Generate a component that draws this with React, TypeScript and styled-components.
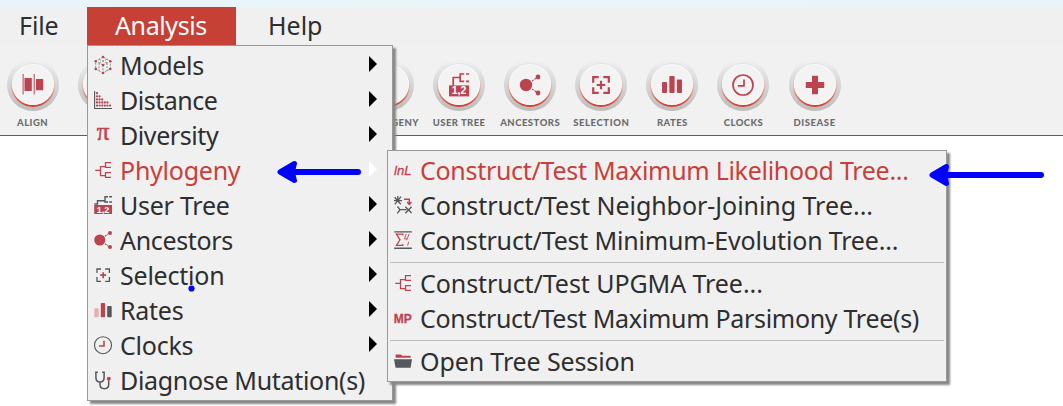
import React from 'react';
import styled, { createGlobalStyle } from 'styled-components';

const RED = '#bb4450';
const DARK = '#54585a';

const Global = createGlobalStyle`
  * { box-sizing: border-box; }
  html, body { margin: 0; padding: 0; background: #fff; overflow: hidden; }
  body { font-family: 'Noto Sans', 'Open Sans', sans-serif; color: #2e2e2e; }
`;

const Window = styled.div`
  position: relative;
  width: 1063px;
  height: 406px;
  overflow: hidden;
  background: #fff;
`;

const TitleStrip = styled.div`
  height: 7px;
  background: linear-gradient(90deg, #e8f3fb, #e9f6f8 35%, #e9f4fa);
`;

const MenuBar = styled.nav`
  display: flex;
  height: 38px;
  background: #f0f0f0;
`;

const MenuTitle = styled.div<{ $w: number; $pad: number; $active?: boolean; $ls?: number }>`
  width: ${p => p.$w}px;
  padding-left: ${p => p.$pad}px;
  height: 38px;
  line-height: 37px;
  font-size: 25px;
  letter-spacing: ${p => p.$ls ?? 0}px;
  white-space: nowrap;
  color: ${p => (p.$active ? '#fff' : '#2e2e2e')};
  background: ${p => (p.$active ? '#c74036' : 'transparent')};
`;

const Toolbar = styled.div`
  display: flex;
  height: 91px;
  padding-top: 14px;
  background: #f1f1f1;
  border-bottom: 1px solid #c8302f;
`;

const ToolButton = styled.div`
  flex: none;
  width: 71.1px;
  display: flex;
  flex-direction: column;
  align-items: center;
  &:first-child { margin-left: -3px; }
`;

const Ring = styled.div`
  width: 52px;
  height: 52px;
  padding: 4px;
  border-radius: 50%;
  background: linear-gradient(#f0f1f2 2%, #dcdddf 35%, #cdcdcd 65%, #bcbcbc);
`;

const Rim = styled.div`
  width: 44px;
  height: 44px;
  padding: 1px 1px 2px;
  border-radius: 50%;
  background: linear-gradient(#dfe5ea, #e6dfdc 30%, #e3a898 60%, #d8402f 95%);
`;

const Face = styled.div`
  height: 41px;
  border-radius: 50%;
  background: #f4f3f3;
  border: 1px solid #fbfafa;
  display: flex;
  align-items: center;
  justify-content: center;
  svg { flex: none; display: block; }
`;

const ToolLabel = styled.div<{ $ls?: number }>`
  margin-top: 6px;
  font: 900 9.5px/12px Lato, sans-serif;
  letter-spacing: ${p => p.$ls ?? 0.45}px;
  color: #6c6c6c;
  white-space: nowrap;
`;

const Menu = styled.div<{ $x: number; $y: number; $w: number }>`
  position: absolute;
  left: ${p => p.$x}px;
  top: ${p => p.$y}px;
  width: ${p => p.$w}px;
  padding: 3px 6px 1px;
  background: #f0f0f0;
  border: 1px solid #999;
  box-shadow: 3px 3px 2px #888;
`;

const MenuRow = styled.div<{ $hot?: boolean }>`
  display: flex;
  height: 35px;
  color: ${p => (p.$hot ? '#c8403a' : '#2e2e2e')};
  > svg { flex: none; margin-top: 7px; overflow: visible; }
`;

const RowText = styled.span<{ $ls?: number }>`
  flex: 1;
  margin-left: 8px;
  line-height: 33px;
  font-size: 25px;
  letter-spacing: ${p => p.$ls ?? 0}px;
  white-space: nowrap;
`;

const Chevron = styled.i<{ $hot?: boolean }>`
  flex: none;
  margin: 7px 9px 0 0;
  width: 0;
  height: 0;
  border: solid transparent;
  border-width: 8px 0 8px 8px;
  border-left-color: ${p => (p.$hot ? '#fff' : '#000')};
`;

const Divider = styled.div`
  height: 8px;
  margin: 0 -4px;
  padding-top: 3px;
  &::after { content: ''; display: block; height: 1px; background: #bdbdbd; }
`;

const Mark = styled.svg<{ $x: number; $y: number }>`
  position: absolute;
  left: ${p => p.$x}px;
  top: ${p => p.$y}px;
`;

const Small = ({ children }: { children: React.ReactNode }) => (
  <svg width="18" height="18" viewBox="0 0 18 18" fill="none">{children}</svg>
);

const ModelsIcon = () => (
  <Small>
    <path d="M9 1L1.7 5.2V13L9 17L16.3 13V5.2ZM9 9V17M9 9L1.7 5.2M9 9L16.3 5.2M5 7V15M13 7V15M5 3.2L13 7M13 3.2L5 7" stroke="#8b8d8e" strokeWidth="1" strokeDasharray="2 1.3" />
    {[[9, 1], [1.7, 5.2], [16.3, 5.2], [1.7, 13], [16.3, 13], [9, 17], [9, 9]].map(([x, y]) => (
      <circle key={`${x}-${y}`} cx={x} cy={y} r="1.3" fill={RED} />
    ))}
  </Small>
);

const DistanceIcon = () => (
  <Small>
    <path d="M.6 0V17.5H18" stroke={DARK} strokeWidth="1.1" />
    {[1, 2, 3, 5, 6].map((n, r) =>
      Array.from({ length: n }, (_, c) => (
        <circle key={`${r}-${c}`} cx={3 + c * 2.6} cy={2.2 + r * 3.1} r="1.15" fill={RED} />
      ))
    )}
  </Small>
);

const PiIcon = () => (
  <Small>
    <text x="9" y="14.4" textAnchor="middle" fontFamily="Liberation Serif, serif" fontSize="25" fill={RED} stroke={RED} strokeWidth=".5">π</text>
  </Small>
);

const TreeIcon = () => (
  <Small>
    <path d="M1.2 9.4H6.5M17 1.6H11.5V5.6H6.5V14.5H11.5M17 6.4H11.5V5M17 11.6H11.5V16.4H17" stroke={RED} strokeWidth="1.25" />
  </Small>
);

const UserTreeIcon = () => (
  <Small>
    <path d="M.3 8H3.5V4.8H11M14 .8H11V6H14M15.2 .8H18M15.2 6H18" stroke={DARK} strokeWidth="1.4" />
    <rect x=".2" y="9" width="17.8" height="9" fill={RED} />
    <text x="9.1" y="16.6" textAnchor="middle" fontFamily="Liberation Sans, sans-serif" fontWeight="bold" fontSize="9" fill="#fff">1,2</text>
  </Small>
);

const AncestorsIcon = () => (
  <Small>
    <circle cx="5.8" cy="9" r="5.6" fill={RED} />
    <circle cx="16" cy="1.9" r="2" fill={RED} />
    <circle cx="16" cy="16" r="2" fill={RED} />
    <path d="M11 5.3L14 3M11 12.7L14 15" stroke={DARK} strokeWidth="1.1" strokeDasharray="2 1" />
  </Small>
);

const SelectionIcon = () => (
  <Small>
    <path d="M3 7V3H7M11.2 3H15.4V7M15.4 11V15.4H11.2M7 15.4H3V11" stroke={DARK} strokeWidth="1.3" />
    <path d="M9.2 6.2V12.2M6.2 9.2H12.2" stroke={RED} strokeWidth="1.7" />
  </Small>
);

const RatesIcon = () => (
  <Small>
    <rect x=".3" y="7.3" width="4.4" height="8.9" rx=".8" fill="#e8aeb0" />
    <rect x="6.8" y="2" width="4.3" height="14.2" rx=".8" fill={RED} />
    <rect x="13.2" y="5" width="4.5" height="11.2" rx=".8" fill={DARK} />
  </Small>
);

const ClocksIcon = () => (
  <Small>
    <circle cx="9" cy="9.2" r="8.5" stroke={DARK} strokeWidth="1.1" />
    <path d="M10 4.7V10H5" stroke={RED} strokeWidth="1.6" />
  </Small>
);

const StethoscopeIcon = () => (
  <Small>
    <path d="M3.8 1.3H1.9V6.2C1.9 9.5 4 11 6 11S10.1 9.5 10.1 6.2V1.3H8.2M6 11V13.5C6 19 14.7 19 14.7 13.5V9.5" stroke={DARK} strokeWidth="1.5" />
    <circle cx="14.8" cy="7.7" r="2" fill={RED} />
  </Small>
);

const LnLIcon = () => (
  <Small>
    <text x="0" y="14.1" textLength="17.5" lengthAdjust="spacingAndGlyphs" fontFamily="Liberation Sans, sans-serif" fontStyle="italic" fontSize="13.5" fill={RED} stroke={RED} strokeWidth=".3">lnL</text>
  </Small>
);

const NeighborIcon = () => (
  <Small>
    <path d="M.6 1.2L6.8 8.2M7 .6L.8 8.4M3.8 0V4.5M0 4.7H8M3.5 10.5L6 13.7L3.3 17.3M6 13.7H12.5M11.3 10.8L17.6 17M17.6 10.8L11.3 17.3" stroke={DARK} strokeWidth="1.3" />
    <path d="M10 3.2H15.3V7M13.2 6L15.3 8.6L17.4 6" stroke={RED} strokeWidth="1.4" />
  </Small>
);

const EvolutionIcon = () => (
  <Small>
    <path d="M.2 .9H17.8M.2 17.2H17.8" stroke={DARK} strokeWidth="1.4" />
    <path d="M8.8 4.6V3.2H2.4L6 8.8L2.4 14.4H8.8V13" stroke={RED} strokeWidth="1.3" />
    <path d="M12.3 3L10.4 7.8H13M15.2 2.8L12.6 9.3M14.7 10.7L13.6 14.6" stroke={RED} strokeWidth=".9" />
  </Small>
);

const ParsimonyIcon = () => (
  <Small>
    <text x="-.2" y="13.6" textLength="18" lengthAdjust="spacingAndGlyphs" fontFamily="Liberation Sans, sans-serif" fontWeight="bold" fontSize="12.5" fill={RED} stroke={RED} strokeWidth=".3">MP</text>
  </Small>
);

const FolderIcon = () => (
  <Small>
    <path d="M1.6 5.8V2.5H7L8.3 3.7H16.6V5.8Z" fill={RED} />
    <path d="M0 7.2H18L16.6 15.8H1.6Z" fill={DARK} />
  </Small>
);

const Big = ({ children }: { children?: React.ReactNode }) => (
  <svg width="28" height="28" viewBox="-14 -14 28 28" fill="none">{children}</svg>
);

const tools: { id: string; label?: string; ls?: number; art?: React.ReactNode }[] = [
  {
    id: 'align',
    label: 'ALIGN',
    art: (
      <g fill={RED}>
        <path d="M-10.4 -11h1v20.6h-1zM.7 -11h1v20.6h-1z" />
        <path d="M-8.5 -7h7.3V6h-7.3zM3 -6h7.2V5.3H3z" />
      </g>
    ),
  },
  { id: 'data' },
  { id: 'models' },
  { id: 'distance' },
  { id: 'diversity' },
  {
    id: 'phylogeny',
    label: 'PHYLOGENY',
    art: <path d="M-9 0H-3M7 -10.5H1V-3.5H-3V5H1M7 -3.5H1M7 2H1V9.5H7" stroke={RED} strokeWidth="1.5" />,
  },
  {
    id: 'user-tree',
    label: 'USER TREE',
    art: (
      <>
        <path d="M-5.8 1V-7.5H1M5.2 -11H1.2V-3.7H5.2M7 -11H10.2M7 -3.7H10.2" stroke={RED} strokeWidth="1.7" />
        <rect x="-10" y=".4" width="20.2" height="11" fill={RED} />
        <text x="0" y="9.3" textAnchor="middle" fontFamily="Liberation Sans, sans-serif" fontWeight="bold" fontSize="10.5" fill="#fff">1,2</text>
      </>
    ),
  },
  {
    id: 'ancestors',
    label: 'ANCESTORS',
    ls: 0.5,
    art: (
      <g fill={RED}>
        <circle cx="-4" cy="0" r="6.2" />
        <circle cx="8" cy="-8" r="2.4" />
        <circle cx="8" cy="8" r="2.4" />
        <path d="M2 -4L6.5 -7M2 4L6.5 7" stroke={RED} strokeWidth="1.1" strokeDasharray="2 1" />
      </g>
    ),
  },
  {
    id: 'selection',
    label: 'SELECTION',
    ls: 0.6,
    art: (
      <path d="M-7.8 -2.3V-7.8H-2.3M2.3 -7.8H7.8V-2.3M7.8 2.3V7.8H2.3M-2.3 7.8H-7.8V2.3M0 -4.3V4.3M-4.3 0H4.3" stroke={RED} strokeWidth="2.2" />
    ),
  },
  {
    id: 'rates',
    label: 'RATES',
    art: (
      <g fill={RED}>
        <rect x="-10" y="-3" width="5" height="11" rx=".9" />
        <rect x="-2.7" y="-9" width="5.3" height="17" rx=".9" />
        <rect x="4.9" y="-5.6" width="5.1" height="13.6" rx=".9" />
      </g>
    ),
  },
  {
    id: 'clocks',
    label: 'CLOCKS',
    art: (
      <g stroke={RED} strokeWidth="1.7">
        <circle cx="0" cy="0" r="10" />
        <path d="M1 -5.5V.9H-5.2" />
      </g>
    ),
  },
  { id: 'disease', label: 'DISEASE', ls: 0.6, art: <path d="M0 -9.2V9.2M-9.2 0H9.2" stroke={RED} strokeWidth="6" /> },
];

const analysisItems: { text: string; ls?: number; Icon: React.FC; sub?: boolean; hot?: boolean }[] = [
  { text: 'Models', ls: -0.3, Icon: ModelsIcon, sub: true },
  { text: 'Distance', ls: -0.5, Icon: DistanceIcon, sub: true },
  { text: 'Diversity', ls: -0.42, Icon: PiIcon, sub: true },
  { text: 'Phylogeny', ls: -0.25, Icon: TreeIcon, sub: true, hot: true },
  { text: 'User Tree', ls: -0.25, Icon: UserTreeIcon, sub: true },
  { text: 'Ancestors', ls: -0.35, Icon: AncestorsIcon, sub: true },
  { text: 'Selection', ls: -0.22, Icon: SelectionIcon, sub: true },
  { text: 'Rates', ls: -0.25, Icon: RatesIcon, sub: true },
  { text: 'Clocks', ls: -0.25, Icon: ClocksIcon, sub: true },
  { text: 'Diagnose Mutation(s)', ls: -0.32, Icon: StethoscopeIcon },
];

const phylogenyItems: { text: string; ls?: number; Icon: React.FC; hot?: boolean; split?: boolean }[] = [
  { text: 'Construct/Test Maximum Likelihood Tree...', ls: -0.29, Icon: LnLIcon, hot: true },
  { text: 'Construct/Test Neighbor-Joining Tree...', ls: -0.05, Icon: NeighborIcon },
  { text: 'Construct/Test Minimum-Evolution Tree...', ls: -0.18, Icon: EvolutionIcon },
  { text: 'Construct/Test UPGMA Tree...', ls: -0.07, Icon: TreeIcon, split: true },
  { text: 'Construct/Test Maximum Parsimony Tree(s)', ls: -0.3, Icon: ParsimonyIcon },
  { text: 'Open Tree Session', ls: -0.12, Icon: FolderIcon, split: true },
];

const Arrow = ({ x, y, w }: { x: number; y: number; w: number }) => (
  <Mark $x={x} $y={y} width={w} height="24" viewBox={`0 0 ${w} 24`}>
    <path d={`M3 12L17.5 3.5Q14.5 12 17.5 20.5Z`} fill="#00f" stroke="#00f" strokeWidth="5" strokeLinejoin="round" />
    <path d={`M12 12H${w - 3}`} stroke="#00f" strokeWidth="6" strokeLinecap="round" />
  </Mark>
);

export default function App() {
  return (
    <Window>
      <Global />
      <TitleStrip />
      <MenuBar>
        <MenuTitle $w={87} $pad={19} $ls={-0.1}>File</MenuTitle>
        <MenuTitle $w={149} $pad={28} $ls={-0.4} $active>Analysis</MenuTitle>
        <MenuTitle $w={120} $pad={32}>Help</MenuTitle>
      </MenuBar>
      <Toolbar>
        {tools.map(t => (
          <ToolButton key={t.id}>
            <Ring><Rim><Face><Big>{t.art}</Big></Face></Rim></Ring>
            {t.label && <ToolLabel $ls={t.ls}>{t.label}</ToolLabel>}
          </ToolButton>
        ))}
      </Toolbar>
      <Menu $x={87} $y={45} $w={306}>
        {analysisItems.map(({ text, ls, Icon, sub, hot }) => (
          <MenuRow key={text} $hot={hot}>
            <Icon />
            <RowText $ls={ls}>{text}</RowText>
            {sub && <Chevron $hot={hot} />}
          </MenuRow>
        ))}
      </Menu>
      <Menu $x={387} $y={150} $w={560}>
        {phylogenyItems.map(({ text, ls, Icon, hot, split }) => (
          <React.Fragment key={text}>
            {split && <Divider />}
            <MenuRow $hot={hot}>
              <Icon />
              <RowText $ls={ls}>{text}</RowText>
            </MenuRow>
          </React.Fragment>
        ))}
      </Menu>
      <Arrow x={277} y={159.5} w={84} />
      <Arrow x={929} y={162.5} w={115} />
      <Mark $x={188} $y={285} width="7" height="7" viewBox="0 0 7 7">
        <circle cx="3.5" cy="3.5" r="3.1" fill="#00f" />
      </Mark>
    </Window>
  );
}
